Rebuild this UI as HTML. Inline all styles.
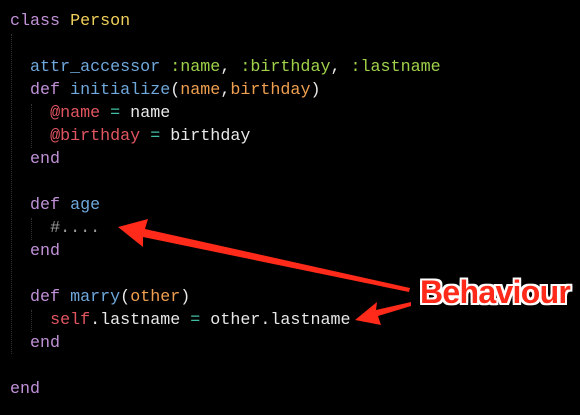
<!DOCTYPE html>
<html><head><style>
body{margin:0;background:#000;width:580px;height:415px;overflow:hidden;position:relative}
pre{position:absolute;left:10px;top:10px;margin:0;font-family:"Liberation Mono",monospace;font-size:16.7px;line-height:23px;color:#e8e8e8}
.k{color:#c191d8}.c{color:#f0cf5a}.f{color:#6fa8dc}.s{color:#9fd24a}.p{color:#f0a050}.i{color:#e25560}.o{color:#3fbfa5}.m{color:#9a9a9a}
.g{position:absolute;border-left:1px dotted #333}
.b{position:absolute;left:420px;top:274px;font-family:"Liberation Sans",sans-serif;font-weight:bold;font-size:32px;color:#ff2a1a;letter-spacing:-0.7px;text-shadow:2px 0 #fff,-2px 0 #fff,0 2px #fff,0 -2px #fff,2px 2px #fff,-2px -2px #fff,2px -2px #fff,-2px 2px #fff}
</style></head><body>
<div class="g" style="left:11px;top:34px;height:320px"></div>
<div class="g" style="left:31px;top:104px;height:44px"></div>
<div class="g" style="left:31px;top:218px;height:22px"></div>
<div class="g" style="left:31px;top:310px;height:22px"></div>
<pre><span class="k">class</span> <span class="c">Person</span>

  <span class="f">attr_accessor</span> <span class="s">:name</span>, <span class="s">:birthday</span>, <span class="s">:lastname</span>
  <span class="k">def</span> <span class="f">initialize</span>(<span class="p">name</span>,<span class="p">birthday</span>)
    <span class="i">@name</span> <span class="o">=</span> name
    <span class="i">@birthday</span> <span class="o">=</span> birthday
  <span class="k">end</span>

  <span class="k">def</span> <span class="f">age</span>
    <span class="m">#....</span>
  <span class="k">end</span>

  <span class="k">def</span> <span class="f">marry</span>(<span class="p">other</span>)
    <span class="i">self</span>.lastname <span class="o">=</span> other.lastname
  <span class="k">end</span>

<span class="k">end</span></pre>
<svg width="580" height="415" style="position:absolute;left:0;top:0">
<polygon points="118,227 148,219 145,229 410,288 409,292 143,237 143,247" fill="#ff2a1a"/>
<polygon points="355,320 377,302 376,310 411,302 411,306 378,316 381,325" fill="#ff2a1a"/>
</svg>
<div class="b">Behaviour</div>
</body></html>
